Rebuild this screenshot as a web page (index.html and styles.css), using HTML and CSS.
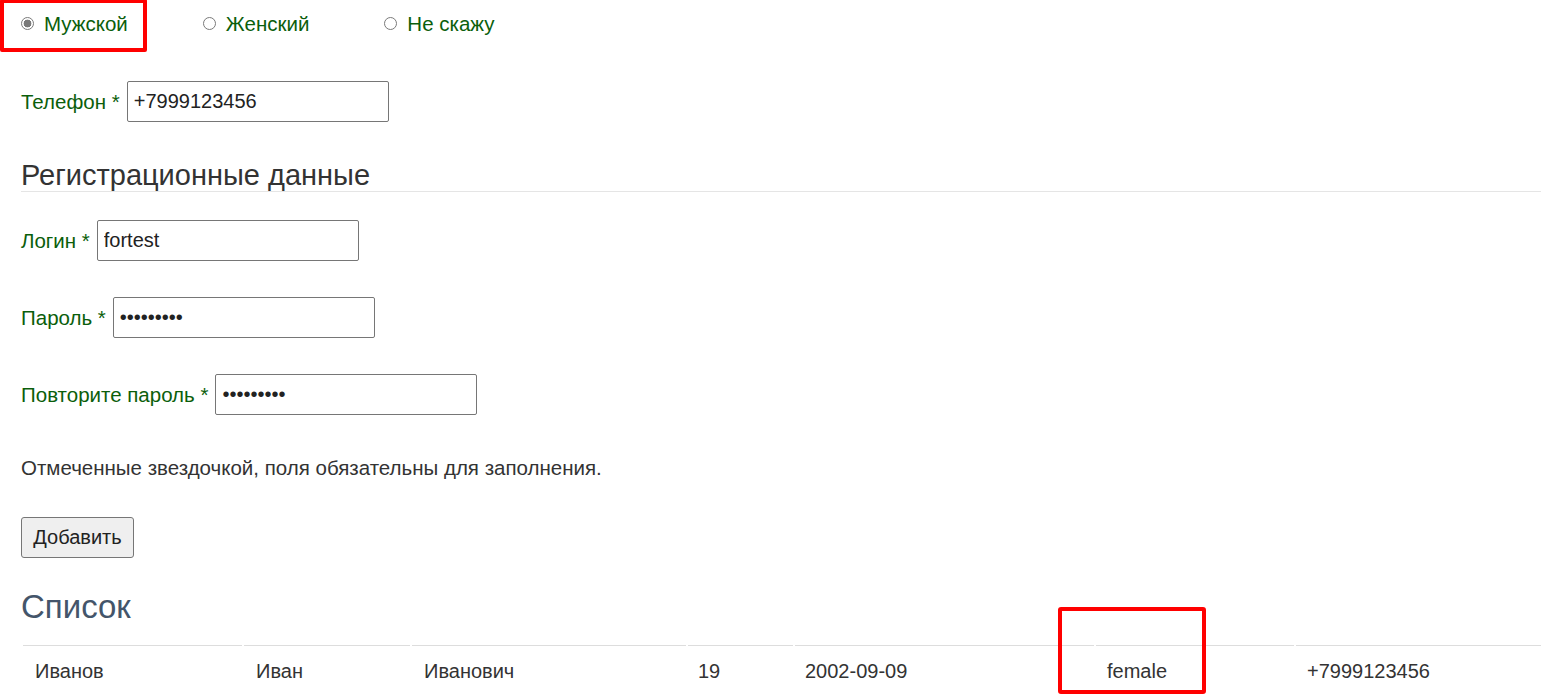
FILE: index.html
```html
<!DOCTYPE html>
<html lang="ru">
<head>
<meta charset="utf-8">
<title>Регистрация</title>
<link rel="stylesheet" href="styles.css">
</head>
<body>
<div class="page">
  <div class="radios">
    <label class="radio-item"><input type="radio" name="sex" class="radio" checked><span class="green">Мужской</span></label>
    <label class="radio-item"><input type="radio" name="sex" class="radio"><span class="green">Женский</span></label>
    <label class="radio-item"><input type="radio" name="sex" class="radio"><span class="green">Не скажу</span></label>
  </div>

  <div class="field first">
    <label class="green">Телефон *</label>
    <input class="text-input" type="text" value="+7999123456">
  </div>

  <div class="legend">Регистрационные данные</div>

  <div class="field">
    <label class="green">Логин *</label>
    <input class="text-input" type="text" value="fortest">
  </div>
  <div class="field">
    <label class="green">Пароль *</label>
    <input class="text-input" type="password" value="123456789">
  </div>
  <div class="field">
    <label class="green">Повторите пароль *</label>
    <input class="text-input" type="password" value="123456789">
  </div>

  <p class="note">Отмеченные звездочкой, поля обязательны для заполнения.</p>

  <button class="btn" type="button">Добавить</button>

  <h2 class="list-title">Список</h2>

  <table class="list">
    <tbody>
      <tr>
        <td class="c1">Иванов</td>
        <td class="c2">Иван</td>
        <td class="c3">Иванович</td>
        <td class="c4">19</td>
        <td class="c5">2002-09-09</td>
        <td class="c6">female</td>
        <td class="c7">+7999123456</td>
      </tr>
    </tbody>
  </table>

  <div class="mark mark-radio"></div>
  <div class="mark mark-cell"></div>
</div>
</body>
</html>
```

FILE: styles.css
```css
html, body {
  margin: 0;
  padding: 0;
  background: #fff;
}
body {
  font-family: "Liberation Sans", Arial, sans-serif;
  font-size: 20.5px;
  color: #333;
  overflow: hidden;
}
.page {
  position: relative;
  padding: 12px 0 0 21px;
}
.green {
  color: #0b5e0b;
}
.radios {
  display: flex;
  align-items: center;
  gap: 75px;
  height: 24px;
  line-height: 24px;
}
.radio-item {
  display: flex;
  align-items: center;
}
.radio {
  appearance: none;
  -webkit-appearance: none;
  width: 13px;
  height: 13px;
  margin: 0 10px 0 0;
  border: 1px solid #7a7a7a;
  border-radius: 50%;
  background: #fff;
  box-sizing: border-box;
  position: relative;
  top: -1px;
}
.radio:checked {
  background: radial-gradient(circle, #7a7a7a 0 3.6px, #fff 4.2px);
}
.field {
  display: flex;
  align-items: center;
  gap: 7px;
  margin-bottom: 36px;
  line-height: 24px;
}
.field.first {
  margin-top: 45px;
  margin-bottom: 0;
}
.text-input {
  width: 262px;
  height: 41px;
  box-sizing: border-box;
  border: 1px solid #767676;
  border-radius: 2px;
  padding: 0 6px;
  font-family: "Liberation Sans", Arial, sans-serif;
  font-size: 20px;
  color: #222;
  background: #fff;
}
.legend {
  margin-top: 38px;
  margin-bottom: 28px;
  font-size: 29px;
  line-height: 31px;
  color: #333;
  border-bottom: 1px solid #e5e5e5;
}
.note {
  margin: 41px 0 37px;
  line-height: 24px;
}
.btn {
  display: block;
  width: 113px;
  height: 41px;
  padding: 0;
  font-family: "Liberation Sans", Arial, sans-serif;
  font-size: 20px;
  color: #222;
  background: #efefef;
  border: 1px solid #767676;
  border-radius: 3px;
}
.list-title {
  margin: 29px 0 16px;
  font-size: 33px;
  line-height: 40px;
  font-weight: normal;
  color: #44556a;
}
.list {
  border-collapse: separate;
  border-spacing: 2px;
  width: 1524px;
  margin-left: 0;
  table-layout: fixed;
  font-size: 20px;
}
.list td {
  border-top: 1px solid #ddd;
  padding: 12px 11px;
  line-height: 26px;
  color: #333;
  white-space: nowrap;
}
.list td.c1 { width: 197px; padding-left: 12px; padding-right: 10px; }
.list td.c2 { width: 144px; padding-left: 12px; padding-right: 10px; }
.list td.c3 { width: 252px; padding-left: 12px; padding-right: 10px; }
.list td.c4 { width: 84px; padding-left: 10px; }
.list td.c5 { width: 278px; padding-left: 10px; }
.list td.c6 { width: 176px; }
.list td.c7 { width: 226px; }
.mark {
  position: absolute;
  border: 4px solid #ff0000;
  border-radius: 2px;
  box-sizing: border-box;
}
.mark-radio {
  left: 0;
  top: -1px;
  width: 147px;
  height: 53px;
}
.mark-cell {
  left: 1058px;
  top: 607px;
  width: 148px;
  height: 87px;
  border-radius: 3px;
}
```
